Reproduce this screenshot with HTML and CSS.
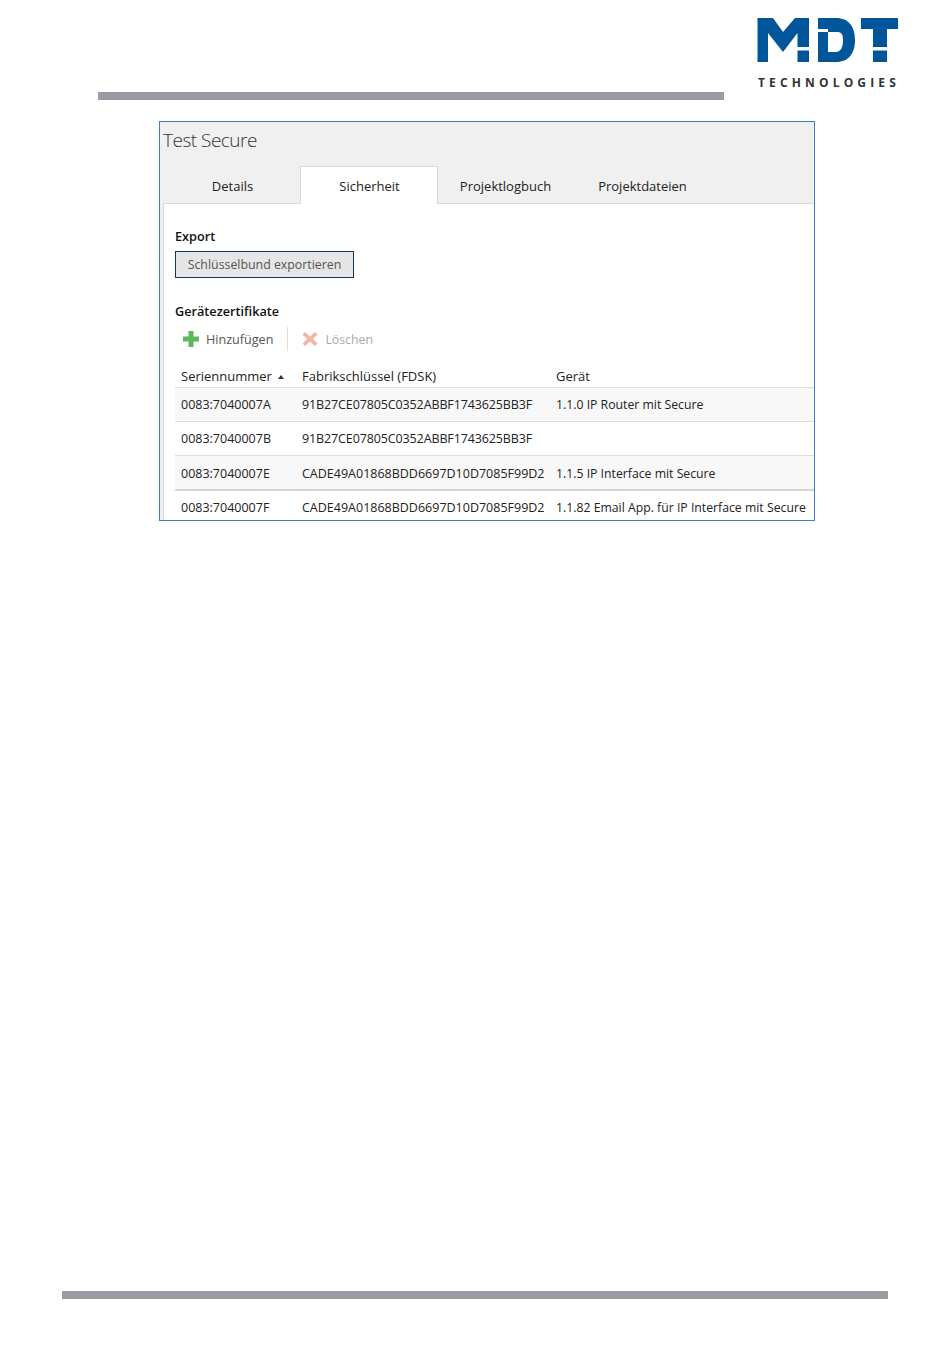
FILE: index.html
```html
<!DOCTYPE html>
<html lang="de">
<head>
<meta charset="utf-8">
<title>Test Secure</title>
<link rel="stylesheet" href="styles.css">
</head>
<body>
<div class="page">
  <header class="head">
    <div class="head-bar"></div>
    <div class="logo">
      <svg class="logo-mark" width="142" height="46" viewBox="0 0 142 46">
        <path fill="#00559b" d="M1.500 1H17L27 15 39 1H53V30H41.500V16L27 35 12 16V45H1.500ZM41.500 33.500H53V45H41.500Z"/>
        <path fill="#00559b" d="M62 1H80C93 1 99 10 99 23S93 45 80 45H62V15H72V35H80C85 35 87 30 87 23S85 15 80 15H72V12H62Z"/>
        <path fill="#00559b" d="M105 1H142V12H131V30H117V12H105ZM117 33.500H131V45H117Z"/>
      </svg>
      <div class="logo-text">TECHNOLOGIES</div>
    </div>
  </header>
  <main class="window">
    <h1 class="title">Test Secure</h1>
    <nav class="tabs">
      <div class="tab first">Details</div>
      <div class="tab active">Sicherheit</div>
      <div class="tab shifted">Projektlogbuch</div>
      <div class="tab shifted">Projektdateien</div>
    </nav>
    <section class="content">
      <h2 class="label">Export</h2>
      <button class="btn">Schlüsselbund exportieren</button>
      <h2 class="label second">Gerätezertifikate</h2>
      <div class="toolbar">
        <div class="tool">
          <svg width="16" height="16" viewBox="0 0 16 16"><path fill="#5cb85c" d="M5.500 0h5v5.500H16v5h-5.500V16h-5v-5.500H0v-5h5.500Z"/></svg>
          <span>Hinzufügen</span>
        </div>
        <div class="sep"></div>
        <div class="tool off">
          <svg width="16" height="16" viewBox="0 0 16 16"><path fill="#f4b5a8" d="M3 1l5 4.500L13 1l2.500 2.500L11 8l4.500 4.500L13 15 8 10.500 3 15 .5 12.500 5 8 .5 3.500Z"/></svg>
          <span>Löschen</span>
        </div>
      </div>
      <div class="table">
        <div class="row headrow"><div>Seriennummer <span class="sort"></span></div><div>Fabrikschlüssel (FDSK)</div><div>Gerät</div></div>
        <div class="row alt"><div>0083:7040007A</div><div class="narrow">91B27CE07805C0352ABBF1743625BB3F</div><div class="dev">1.1.0 IP Router mit Secure</div></div>
        <div class="row"><div>0083:7040007B</div><div class="narrow">91B27CE07805C0352ABBF1743625BB3F</div><div class="dev"></div></div>
        <div class="row alt thick"><div>0083:7040007E</div><div>CADE49A01868BDD6697D10D7085F99D2</div><div class="dev">1.1.5 IP Interface mit Secure</div></div>
        <div class="row last"><div>0083:7040007F</div><div>CADE49A01868BDD6697D10D7085F99D2</div><div class="dev">1.1.82 Email App. für IP Interface mit Secure</div></div>
      </div>
    </section>
  </main>
  <footer class="foot"></footer>
</div>
</body>
</html>
```
FILE: styles.css
```css
* { box-sizing: border-box; }
html, body { margin: 0; padding: 0; background: #fff; }
.page { width: 950px; height: 1359px; display: flex; flex-direction: column; font-family: "Open Sans", "Noto Sans", sans-serif; color: #222; }
.head { flex: none; height: 121px; padding: 18px 52px 0 98px; display: flex; justify-content: space-between; align-items: flex-start; }
.head-bar { width: 626px; height: 8px; margin-top: 74px; background: #9a9ca3; }
.logo { width: 142px; margin-top: -1px; }
.logo-mark { display: block; }
.logo-text { margin-top: 13px; padding-left: 2px; font: 700 12px/14px "Open Sans", sans-serif; letter-spacing: 4.150px; color: #333; white-space: nowrap; }
.window { flex: none; width: 656px; height: 400px; margin-left: 159px; border: 1px solid #3d7fc4; background: #f0f0f0; display: flex; flex-direction: column; overflow: hidden; }
.title { flex: none; margin: 0; padding: 4px 0 0 3px; height: 44px; font-size: 19px; line-height: 28px; font-weight: 300; letter-spacing: -0.500px; color: #333; }
.tabs { flex: none; display: flex; height: 38px; padding-left: 3px; }
.tab { width: 137px; height: 38px; padding-top: 11px; text-align: center; font-size: 13px; line-height: 18px; border-bottom: 1px solid #d9d9d9; }
.tab.first { padding-left: 2px; }
.tab.shifted { padding-right: 2px; }
.tab.active { width: 138px; padding-top: 10px; padding-left: 1px; background: #fff; border: 1px solid #d9d9d9; border-bottom: 0; }
.tabs::after { content: ""; flex: 1; border-bottom: 1px solid #d9d9d9; }
.content { flex: 1; min-height: 0; margin-left: 3px; background: #fff; border-left: 1px solid #d9d9d9; padding: 23px 0 0 11px; }
.label { margin: 0; font-size: 12.700px; line-height: 18px; font-weight: 600; color: #111; }
.label.second { margin-top: 24px; }
.btn { display: block; width: 179px; height: 27px; margin-top: 6px; padding: 0; border: 1px solid #14375f; background: #e6e6e6; font: 12.350px/18px "Open Sans", sans-serif; color: #555; text-align: center; }
.toolbar { display: flex; align-items: center; height: 26px; margin-top: 6px; padding-left: 8px; }
.tool { display: flex; align-items: center; gap: 7px; font-size: 12.600px; color: #555; }
.tool.off { color: #aaa; font-size: 12.300px; }
.sep { width: 1px; height: 24px; background: #ddd; margin: 0 14px; }
.table { margin-top: 11px; font-size: 12.500px; }
.row { display: grid; grid-template-columns: 121px 254px 1fr; height: 34px; padding-left: 6px; align-items: center; white-space: nowrap; border-bottom: 1px solid #ddd; }
.row.headrow { height: 25px; padding-top: 2px; font-size: 13px; color: #222; }
.row.alt { background: #f8f8f8; }
.row.thick { height: 35px; padding-top: 1px; border-bottom: 2px solid #d5d5d5; }
.row.last { padding-bottom: 2px; border-bottom: 0; }
.narrow { letter-spacing: -0.120px; }
.dev { font-size: 12.250px; }
.sort { display: inline-block; width: 0; height: 0; margin-left: 3px; vertical-align: 2px; border: 3.500px solid transparent; border-top: 0; border-bottom: 4px solid #333; }
.foot { flex: none; width: 826px; height: 8px; margin: 770px 0 0 62px; background: #9a9ca3; }
```
